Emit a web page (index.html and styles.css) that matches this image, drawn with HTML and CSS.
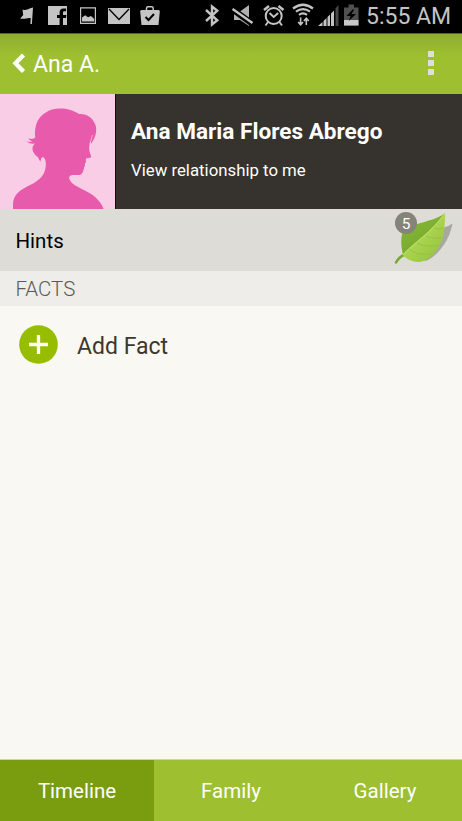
FILE: index.html
```html
<!DOCTYPE html>
<html lang="en">
<head>
  <meta charset="UTF-8">
  <meta name="viewport" content="width=device-width, initial-scale=1.0">
  <title>Ana A.</title>
  <link rel="stylesheet" href="styles.css">
</head>
<body>
  <div class="screen">
    <div class="status-bar">
      <div class="status-icons status-left">
        <svg width="16" height="33" viewBox="19 0 16 33"><path d="M22.500 9.500c3 1.500 5-.5 10.500-2l-1.100 16.500h-1.500l.3-6c-4-.5-6 1.500-10.500 .5l3-3.500z" fill="#c4c4c4"/></svg>
        <svg width="19" height="33" viewBox="48 0 19 33"><path d="M48 6h19v19h-4v-7h3l.4-3H63v-2.200c0-1 .4-1.500 1.500-1.500h1.600V8.500h-2.500c-2.700 0-4 1.500-4 4V15H57v3h2.600v7H48z" fill="#c4c4c4"/></svg>
        <svg width="16" height="33" viewBox="80 0 16 33"><path d="M80.600 7.800h14.800v15.500H80.600z" fill="none" stroke="#c4c4c4" stroke-width="1.200"/><path d="M82 21.500v-4l3.200-2.200 2.800 2 3-1.200 3.200 2.800v2.600z" fill="#c4c4c4"/></svg>
        <svg width="22" height="33" viewBox="108 0 22 33"><path d="M108 8h22v16h-22z" fill="#c4c4c4"/><path d="M109 9l10 10.500L129 9" fill="none" stroke="#000" stroke-width="1.300"/></svg>
        <svg width="20" height="33" viewBox="140 0 20 33"><path d="M146.500 10V8.500q0-1.700 1.600-1.700h3.500q1.600 0 1.600 1.700V10" fill="none" stroke="#c4c4c4" stroke-width="1.500"/><path d="M141.500 10h17q1.300 0 1.300 1.500L158.500 25h-17l-1.300-13.500q0-1.500 1.300-1.500z" fill="#c4c4c4"/><path d="M145.500 17l3 3 5.500-6" fill="none" stroke="#000" stroke-width="2"/></svg>
      </div>
      <div class="status-icons status-right">
        <svg width="14" height="33" viewBox="205 0 14 33"><path d="M206 10l11.300 10.300-5.300 4.200V6.500l5.300 4.200L206 21" fill="none" stroke="#c4c4c4" stroke-width="2.400"/></svg>
        <svg width="22" height="33" viewBox="232 0 22 33"><path d="M234 11.500h6l9-6.500v21l-9-6h-6z" fill="#b0b0b0"/><path d="M232 9l20 14.500" stroke="#000" stroke-width="6"/><path d="M232.500 9l20 14M233.500 7.500" stroke="#c4c4c4" stroke-width="2.400"/></svg>
        <svg width="22" height="33" viewBox="263 0 22 33"><g fill="none" stroke="#c4c4c4"><circle cx="273.700" cy="16" r="8" stroke-width="2"/><path d="M269.500 13l4.200 4 4.500-4M268 22l-2.500 3.500M279.500 22l2.500 3.500" stroke-width="1.900"/><path d="M264 10l5-4M278.500 6l5 4" stroke-width="2.500"/></g></svg>
        <svg width="22" height="33" viewBox="292 0 22 33"><g fill="none" stroke="#c4c4c4" stroke-width="2.200"><path d="M293 8.500q10-7.500 20 0M296 11.700q7-5.200 14 0M299 14.800q4-3 8 0"/><path d="M300.600 17.500v7M298.200 22l2.400 2.800L303 22M306.300 25v-6.500M303.900 21l2.400-2.800 2.400 2.800" stroke-width="1.600"/></g></svg>
        <svg width="21" height="33" viewBox="318 0 21 33"><g fill="#c4c4c4"><path d="M318 26l4.500-4v4zM323.500 21l3-3v8h-3zM327.500 17l2.500-2.500V26h-2.500zM331 13.500l3-3V26h-3z"/><path d="M335.500 8.500l3-3.500v21h-3z" fill="#484848"/></g></svg>
        <svg width="15" height="33" viewBox="344 0 15 33"><path d="M344 7.500h4.500v-3h5.500v3h4.500v18H344z" fill="#505050"/><path d="M344 20h14.500v5.500H344z" fill="#c8c8c8"/><path d="M353 9l-6.500 7h4.200l-2 5 7.300-7h-4.500l2.500-4z" fill="#000"/></svg>
      </div>
      <span class="clock">5:55 AM</span>
    </div>

    <header class="app-bar">
      <svg class="back" width="14" height="22" viewBox="0 0 14 22"><path d="M11.500 2L3.500 10.200l8 8.300" fill="none" stroke="#fff" stroke-width="4.400"/></svg>
      <h1>Ana A.</h1>
      <div class="overflow"><i></i><i></i><i></i></div>
    </header>

    <section class="profile">
      <svg class="avatar" width="115" height="115" viewBox="0 0 115 115">
        <path fill="#e85bac" d="M13 115V111C13 103 17 99 22 95.500C30 90.500 39 88 43.500 80C46.500 75 46.700 65 43.500 63.500C41.500 62.500 41 65 40.500 67.500C38.800 66 38.500 63 36.500 62C33.500 59 31.500 56.500 33 52C34 50.500 34.500 50 34.500 49.500C31 50 28 49 26.500 47C29 48.300 31.500 48 33 47.500C31 47.300 29 46 28.500 44C30.500 45.500 34 45 35.300 43.500C34.500 39 35 34 36.500 29.500C40 20.500 49 14.500 60 14.500C67 14.500 74 16.500 79 20C87 19.500 93 24 95.500 31C97.500 38 95 44 91 50C90.700 48 91.500 46 91.500 45C89.500 48 89.500 50.500 89.200 54C89.200 57 90 59.500 91 62C91.500 63 91 63.500 90 63.700L86 64.500C85.500 67 86.500 68 85.300 69C84.500 70.500 85.500 72 84.200 73C83.500 76 83 80.500 79 81C76 81.500 72 80 70 82C68 84 70 86.500 72 89C79 95 92 98 98 106C101 109 102.500 112 103.500 115Z"/>
        <path d="M91 46l1.500-5" stroke="#f9cde6" stroke-width=".7"/>
      </svg>
      <div class="profile-text">
        <h2>Ana Maria Flores Abrego</h2>
        <a class="relationship">View relationship to me</a>
      </div>
    </section>

    <div class="hints">
      <span>Hints</span>
      <div class="hint-leaf">
        <svg width="62" height="60" viewBox="0 0 62 60">
          <defs>
            <linearGradient id="leaf-top" x1="0" y1="0" x2=".6" y2="1">
              <stop offset="0" stop-color="#8abb38"/>
              <stop offset="1" stop-color="#74a62b"/>
            </linearGradient>
            <linearGradient id="leaf-bottom" x1=".4" y1=".3" x2="1" y2="1">
              <stop offset="0" stop-color="#b3d956"/>
              <stop offset="1" stop-color="#8fbf3a"/>
            </linearGradient>
          </defs>
          <path d="M60.500 14.500C59 21 57 29 51 37C46 44 41 49 34 52L30 50L50 19Q56 18 60.500 14.500Z" fill="#a8a8a3"/>
          <path d="M4 53.500Q7 48 12 46" fill="none" stroke="#75a82c" stroke-width="2.500" stroke-linecap="round"/>
          <path d="M53 4C53 16 52 27 49 34C44 45 36 52 27 53C20 53 14 50 11 46C9 38 9 30 10 25C20 12 41 16 53 4Z" fill="url(#leaf-bottom)"/>
          <path d="M53 4C41 14 20 12 10 25C9 31 9 38 11 45C22 33 39 23 53 4Z" fill="url(#leaf-top)"/>
          <path d="M11 46C22 34 39 24 53 4" fill="none" stroke="#bfe070"/>
          <g fill="none" stroke="#8db944" stroke-width=".6"><path d="M17 40q8 7 22 5M25 34q9 5 22 2M34 27q7 4 16 1M42 19q5 2 9 0"/></g>
        </svg>
        <span class="badge">5</span>
      </div>
    </div>

    <h3 class="section-title">FACTS</h3>

    <main class="facts">
      <div class="add-fact">
        <svg width="39" height="39" viewBox="0 0 39 39"><circle cx="19.500" cy="19.500" r="19.300" fill="#96bd00"/><path d="M10 19.500h19M19.500 10v19" stroke="#fff" stroke-width="3.300"/></svg>
        <span>Add Fact</span>
      </div>
    </main>

    <nav class="tabs">
      <a class="tab active">Timeline</a>
      <a class="tab">Family</a>
      <a class="tab">Gallery</a>
    </nav>
  </div>
</body>
</html>
```
FILE: styles.css
```css
body {
  margin: 0;
  font-family: Roboto, 'Liberation Sans', sans-serif;
  background-color: #f9f8f3;
}
h1, h2, h3 {
  margin: 0;
}
svg {
  display: block;
  flex-shrink: 0;
}
.screen {
  display: flex;
  flex-direction: column;
  height: 821px;
  overflow: hidden;
}
.status-bar {
  display: flex;
  align-items: center;
  height: 33px;
  padding: 0 12px 0 19px;
  background-color: #000;
}
.status-icons {
  display: flex;
  gap: 12px;
}
.status-left svg:nth-child(1),
.status-left svg:nth-child(2) {
  margin-right: 1px;
}
.status-left svg:nth-child(4) {
  margin-right: -2px;
}
.status-right {
  gap: 8px;
  margin-left: auto;
  margin-right: 7px;
}
.status-right svg:first-child {
  margin-right: 5px;
}
.status-right svg:nth-child(2) {
  margin-right: 1px;
}
.status-right svg:nth-child(3) {
  margin-right: -1px;
}
.status-right svg:nth-child(4) {
  margin-right: -4px;
}
.status-right svg:nth-child(5) {
  margin-right: -3px;
}
.clock {
  width: 84px;
  color: #c4c4c4;
  font-size: 23px;
  line-height: 33px;
  white-space: nowrap;
}
.app-bar {
  display: flex;
  align-items: center;
  box-sizing: border-box;
  height: 61px;
  padding: 0 28px 0 12px;
  background: linear-gradient(#8fac31, #9dbf30 35%);
  border-top: 1px solid #55661e;
  color: #fff;
}
.app-bar h1 {
  margin-left: 7px;
  font-size: 23px;
  font-weight: 400;
}
.overflow {
  display: flex;
  flex-direction: column;
  gap: 3px;
  margin-left: auto;
  margin-bottom: 2px;
}
.overflow i {
  width: 6px;
  height: 6px;
  background-color: #dedede;
}
.profile {
  display: flex;
  height: 115px;
  background-color: #36322d;
  color: #fff;
}
.avatar {
  background-color: #f9cde6;
  border-right: 1px solid #07150a;
}
.profile-text {
  padding: 24px 0 0 15px;
}
.profile-text h2 {
  font-size: 22.6px;
  line-height: 28px;
  white-space: nowrap;
}
.relationship {
  display: block;
  margin-top: 13px;
  font-size: 16.8px;
  line-height: 22px;
}
.hints {
  display: flex;
  justify-content: space-between;
  height: 62px;
  padding: 0 8px 0 15.5px;
  background-color: #dddcd7;
  color: #000;
  font-size: 20.5px;
  line-height: 64px;
}
.hint-leaf {
  position: relative;
  width: 62px;
}
.badge {
  position: absolute;
  top: 3px;
  left: 3px;
  width: 22px;
  height: 22px;
  border-radius: 50%;
  background-color: #85837a;
  color: #fff;
  font-size: 15.5px;
  line-height: 24px;
  text-align: center;
}
.section-title {
  height: 35px;
  padding-left: 15.5px;
  background-color: #eeede9;
  color: #5b5955;
  font-size: 20.5px;
  font-weight: 300;
  line-height: 37px;
}
.facts {
  flex: 1;
}
.add-fact {
  display: flex;
  align-items: center;
  gap: 19px;
  padding: 19px;
  color: #3f352e;
  font-size: 23px;
}
.add-fact span {
  padding-top: 3px;
}
.tabs {
  display: flex;
  height: 61px;
  border-top: 1px solid #cbd6a0;
}
.tab {
  flex: 1;
  background-color: #9dbf30;
  color: #fff;
  font-size: 20.5px;
  line-height: 63px;
  text-align: center;
}
.tab.active {
  background-color: #799d0f;
}
```
